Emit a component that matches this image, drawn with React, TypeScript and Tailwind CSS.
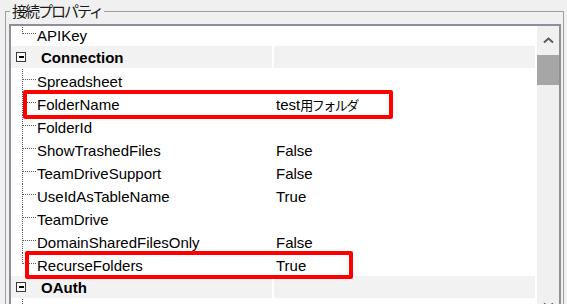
import React from "react";

type Row =
  | { kind: "cat"; label: string }
  | { kind: "prop"; label: string; value?: string; last?: boolean };

const rows: Row[] = [
  { kind: "prop", label: "APIKey", last: true },
  { kind: "cat", label: "Connection" },
  { kind: "prop", label: "Spreadsheet" },
  { kind: "prop", label: "FolderName", value: "test用フォルダ" },
  { kind: "prop", label: "FolderId" },
  { kind: "prop", label: "ShowTrashedFiles", value: "False" },
  { kind: "prop", label: "TeamDriveSupport", value: "False" },
  { kind: "prop", label: "UseIdAsTableName", value: "True" },
  { kind: "prop", label: "TeamDrive" },
  { kind: "prop", label: "DomainSharedFilesOnly", value: "False" },
  { kind: "prop", label: "RecurseFolders", value: "True", last: true },
  { kind: "cat", label: "OAuth" },
  { kind: "prop", label: "" },
];

// dotted tree connector for a property row
function TreeLines({ last }: { last?: boolean }) {
  return (
    <svg width="26" height="23" className="shrink-0" shapeRendering="crispEdges">
      <line x1="11.5" y1="0" x2="11.5" y2={last ? 11 : 23} stroke="#5e5e5e" strokeDasharray="1 1" />
      <line x1="12" y1="10.5" x2="25" y2="10.5" stroke="#5e5e5e" strokeDasharray="1 1" />
    </svg>
  );
}

function MinusBox() {
  return (
    <svg width="30" height="22" className="shrink-0" shapeRendering="crispEdges">
      <rect x="5.5" y="6.5" width="9" height="9" fill="#fff" stroke="#3a3a3a" />
      <rect x="8" y="10" width="5" height="2" fill="#000" />
    </svg>
  );
}

function Value({ text }: { text: string }) {
  const m = text.match(/^([A-Za-z]*)(.*)$/);
  const latin = m ? m[1] : text;
  const cjk = m ? m[2] : "";
  return (
    <span>
      {latin}
      {cjk && (
        <span className="text-[13px] tracking-[-1.5px] font-['Noto_Sans_CJK_JP',sans-serif]">{cjk}</span>
      )}
    </span>
  );
}

function Chevron({ down }: { down?: boolean }) {
  return (
    <svg width="11" height="7" viewBox="0 0 11 7">
      <path
        d={down ? "M1 1.5 L5.5 5.5 L10 1.5" : "M1 5.5 L5.5 1.5 L10 5.5"}
        fill="none"
        stroke="#5a5a5a"
        strokeWidth="2"
      />
    </svg>
  );
}

export default function App() {
  return (
    <div className="relative w-[567px] h-[304px] overflow-hidden bg-[#f0f0f0] pt-[1px] font-['Liberation_Sans','Noto_Sans_CJK_JP',sans-serif] text-black">
      <fieldset className="ml-[5px] w-[559px] border border-[#a0a0a0] pl-[3px] pr-[2px] pb-[10px]">
        <legend className="ml-[1px] px-[2px] text-[15px] leading-[20px] tracking-[-2px] text-[#1a1a1a] font-['Noto_Sans_CJK_JP',sans-serif]">
          接続プロパティ
        </legend>
        <div className="mt-[3px] flex h-[297px] border-2 border-[#8e8e98] bg-white">
          {/* property rows */}
          <div className="flex-1 overflow-hidden pr-[2px]">
            <div className="-mt-[3px] flex flex-col">
              {rows.map((r, i) =>
                r.kind === "cat" ? (
                  <div key={i} className="h-[23px] border-b border-white">
                    <div className="flex h-[22px] bg-[#f2f2f2]">
                      <div className="flex w-[261px] items-start">
                        <MinusBox />
                        <span className="pt-[1px] text-[15px] leading-[21px] font-bold">{r.label}</span>
                      </div>
                      <div className="w-[2px] bg-white" />
                      <div className="flex-1" />
                    </div>
                  </div>
                ) : (
                  <div key={i} className="flex h-[23px] text-[15px]">
                    <div className="flex w-[261px] items-start">
                      <TreeLines last={r.last} />
                      <span className="pt-[2px] leading-[21px] whitespace-nowrap">{r.label}</span>
                    </div>
                    <div className="w-[2px]" />
                    <div className="flex-1 pl-[2px] pt-[2px] leading-[21px] whitespace-nowrap">
                      {r.value && <Value text={r.value} />}
                    </div>
                  </div>
                )
              )}
            </div>
          </div>

          {/* vertical scrollbar */}
          <div className="flex w-[22px] flex-col bg-[#f0f0f0]">
            <div className="flex h-[28px] items-center justify-center">
              <Chevron />
            </div>
            <div className="mt-[1px] h-[30px] bg-[#a6a6a6]" />
            <div className="flex-1" />
            <div className="flex h-[28px] items-center justify-center">
              <Chevron down />
            </div>
          </div>
        </div>
      </fieldset>

      {/* red annotation boxes */}
      <div className="absolute left-[23px] top-[90px] h-[29px] w-[370px] rounded-[2px] border-4 border-[#ff0000]" />
      <div className="absolute left-[25px] top-[251px] h-[28px] w-[328px] rounded-[2px] border-4 border-[#ff0000]" />
    </div>
  );
}
